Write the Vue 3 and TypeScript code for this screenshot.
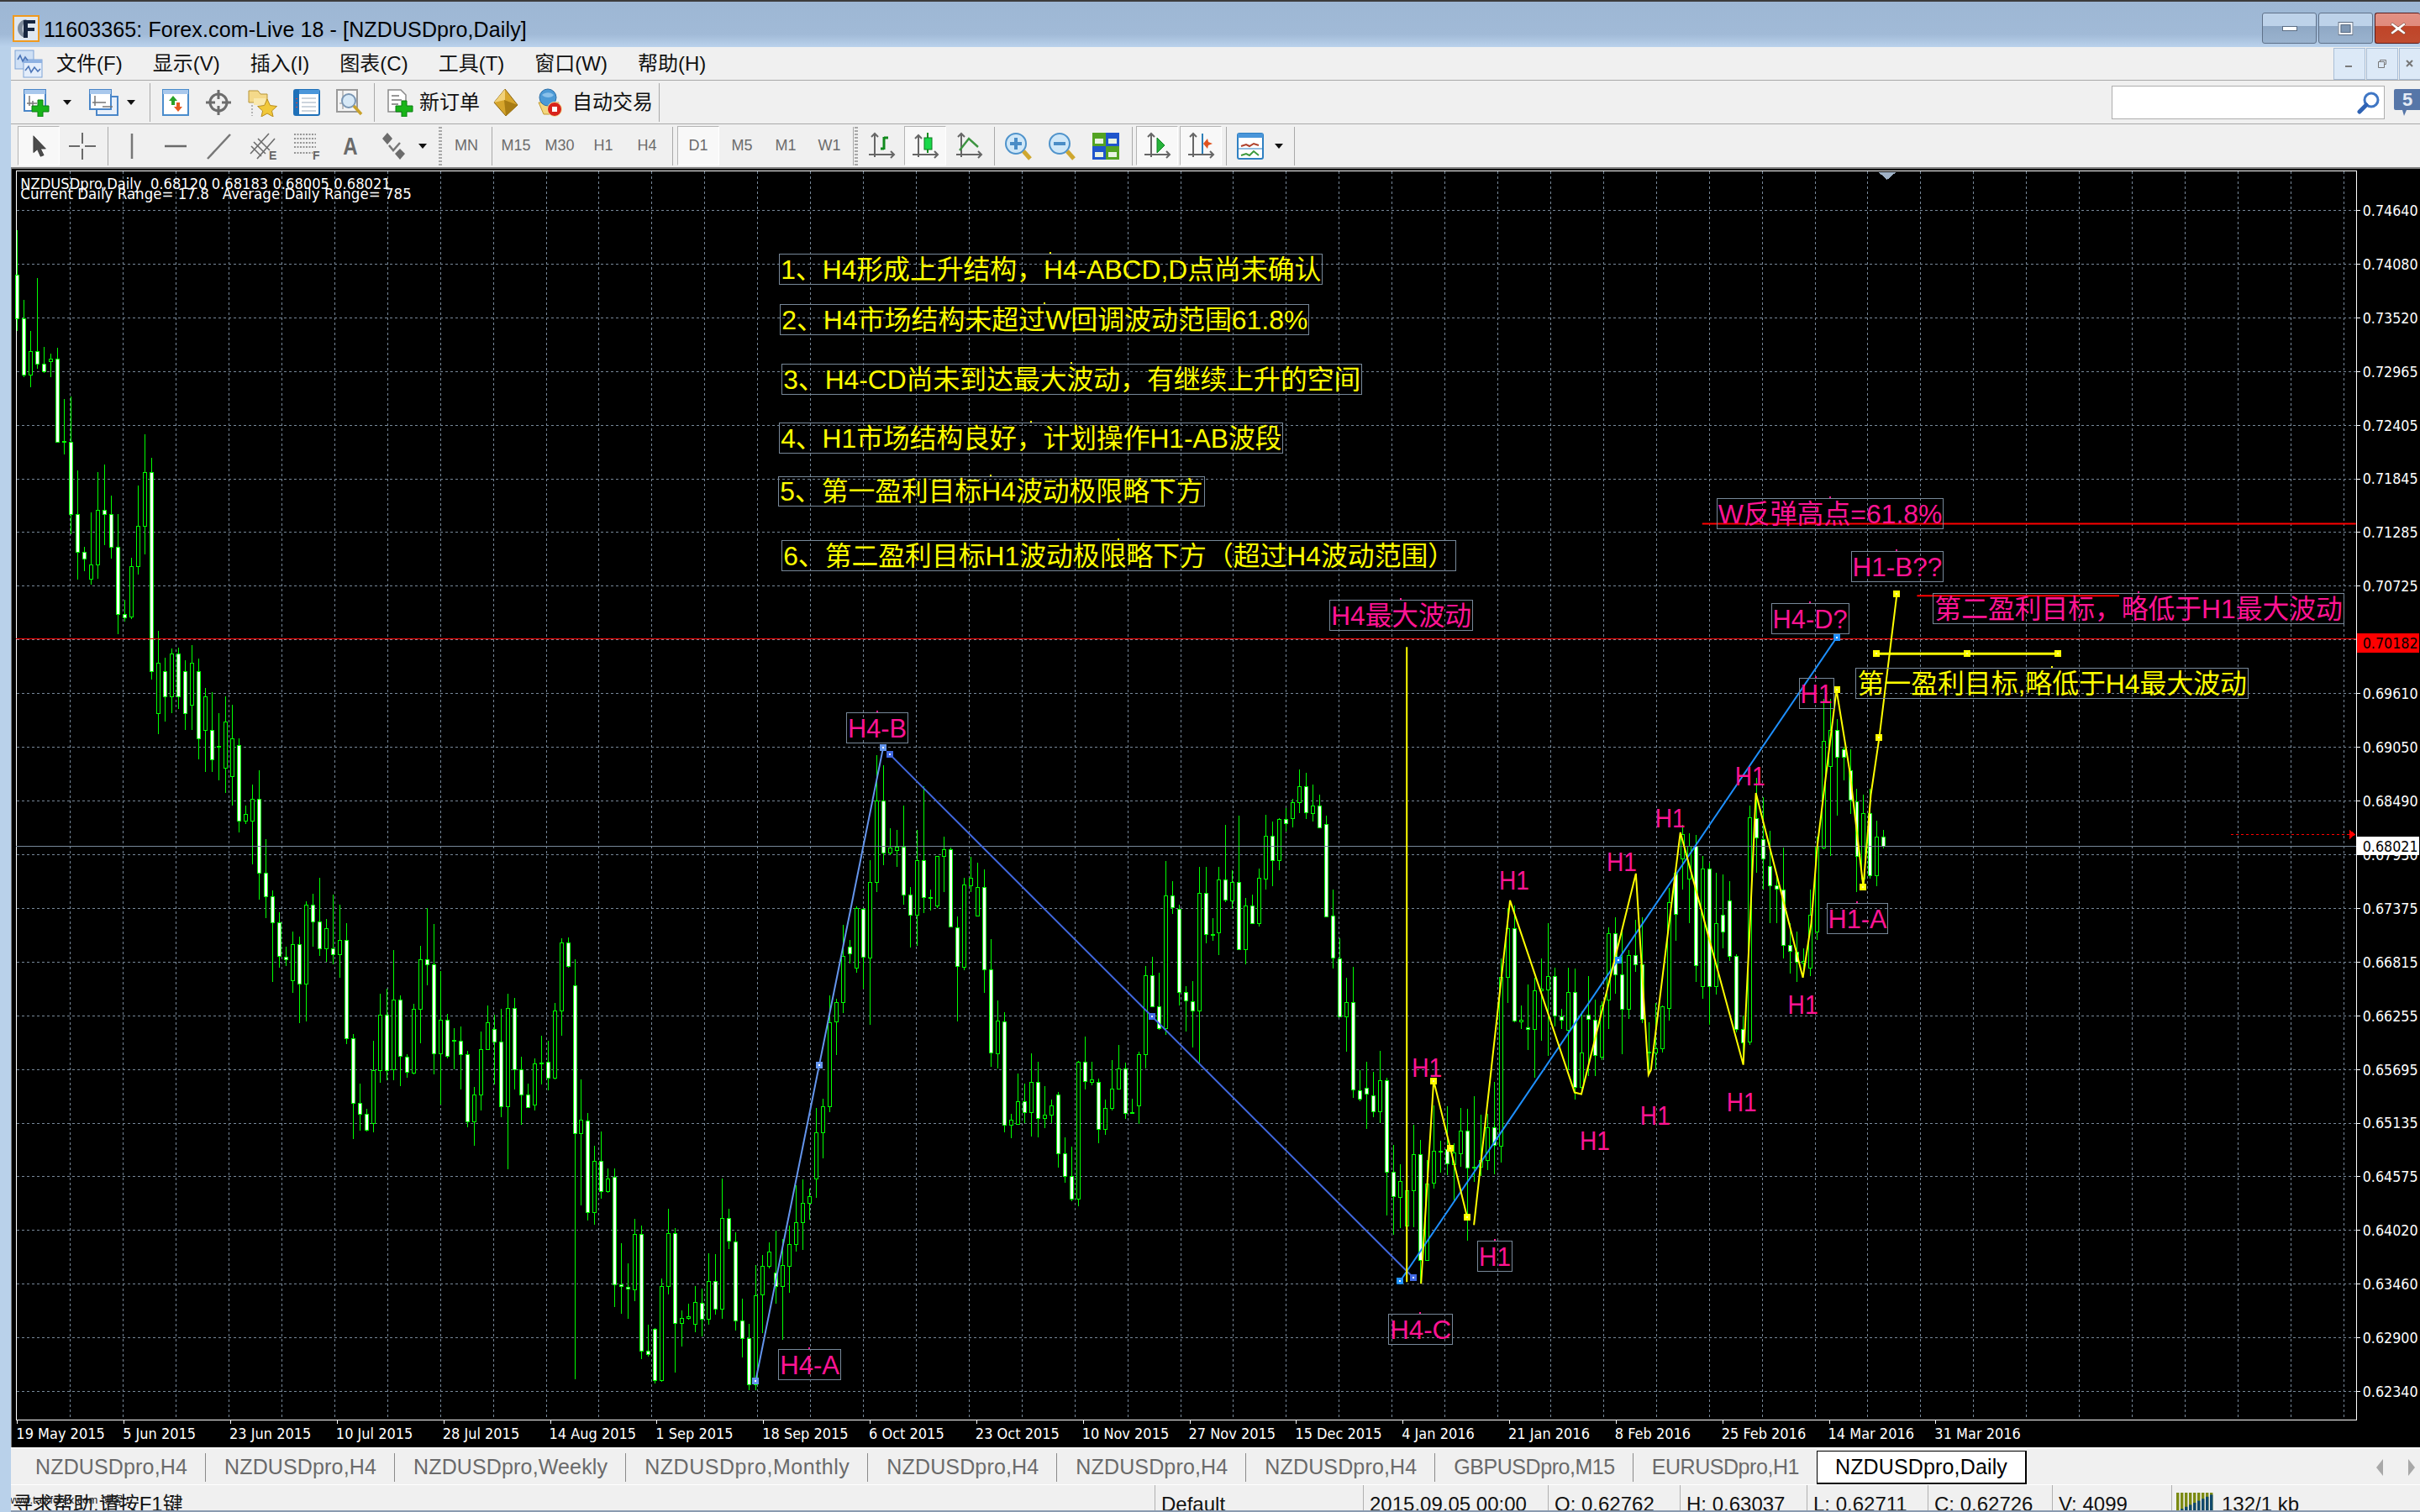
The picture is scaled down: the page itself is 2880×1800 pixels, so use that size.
<template>
  <div class="window">
    <header class="titlebar">
      <svg class="app-logo" viewBox="0 0 32 32">
        <rect x="1" y="1" width="30" height="30" fill="#dfe7f0" stroke="#f09a1e" stroke-width="2" />
        <path d="M17 5a11 11 0 0 0 0 22a14 14 0 0 1 0-22z" fill="#7f8c9c" />
        <path d="M13 6h14v4h-9v5h8v4h-8v8h-5z" fill="#17263f" />
      </svg>
      <span class="title-text">11603365: Forex.com-Live 18 - [NZDUSDpro,Daily]</span>
      <div class="win-buttons">
        <button class="win-btn">
          <svg viewBox="0 0 20 10" class="win-glyph"><rect x="1.5" y="2.5" width="17" height="5" fill="#fff" stroke="#5b6d84" /></svg>
        </button>
        <button class="win-btn">
          <svg viewBox="0 0 20 16" class="win-glyph"><rect x="2" y="1.5" width="15" height="13" fill="none" stroke="#fff" stroke-width="3" /><rect x="1" y="0.5" width="17" height="15" fill="none" stroke="#5b6d84" /><rect x="4" y="3.5" width="11" height="9" fill="#7f97b3" stroke="#5b6d84" /></svg>
        </button>
        <button class="win-btn win-btn--close">
          <svg viewBox="0 0 20 16" class="win-glyph"><path d="M3 1l7 5 7-5 2 2-6 5 6 5-2 2-7-5-7 5-2-2 6-5-6-5z" fill="#fff" stroke="#6d3a30" stroke-width="0.6" /></svg>
        </button>
      </div>
    </header>

    <div class="body">
      <nav class="menubar">
        <svg class="menu-icon" viewBox="0 0 34 34">
          <rect x="1" y="1" width="22" height="22" fill="#cfe0f5" stroke="#7ea4d6" />
          <rect x="11" y="12" width="22" height="21" fill="#e4eefb" stroke="#7ea4d6" />
          <rect x="11" y="12" width="22" height="4" fill="#8fb2e2" />
          <path d="M4 12l3-5 3 7 3-5 3 4M13 25l4-5 3 7 4-6 4 5 3-3" fill="none" stroke="#4d76b8" stroke-width="1.6" />
        </svg>
        <span v-for="m in menus" :key="m" class="menu-item">{{ m }}</span>
        <div class="mdi-buttons">
          <span class="mdi-btn"><svg viewBox="0 0 12 12" class="mdi-glyph"><rect x="1" y="8" width="8" height="2" fill="#7a7a7a" /></svg></span>
          <span class="mdi-btn"><svg viewBox="0 0 12 12" class="mdi-glyph"><path d="M3.5 3.5V1.5h7v5h-2M1.5 3.5h7v7h-7z" fill="none" stroke="#777" /></svg></span>
          <span class="mdi-btn mdi-btn--last"><svg viewBox="0 0 12 12" class="mdi-glyph"><path d="M2 2l7 7M9 2l-7 7" stroke="#777" stroke-width="2" /></svg></span>
        </div>
      </nav>

      <div class="toolbar toolbar--main">
        <svg class="ic" viewBox="0 0 34 34">
          <rect x="2" y="2" width="25" height="25" fill="#fff" stroke="#4a86c8" stroke-width="2" />
          <rect x="2" y="2" width="25" height="5" fill="#a9c8ec" />
          <path d="M8 9v12M12 15v8M5 18h12" stroke="#777" stroke-width="1.5" />
          <path d="M18 14h6v7h7v7h-7v6h-6v-6h-7v-7h7z" fill="#19b419" stroke="#0b7d12" />
        </svg>
        <span class="caret caret--a"></span>
        <svg class="ic ic--wide m-profile" viewBox="0 0 37 34">
          <rect x="10" y="10" width="25" height="22" fill="#e9f0fa" stroke="#4a86c8" stroke-width="2" />
          <rect x="2" y="2" width="25" height="23" fill="#fff" stroke="#4a86c8" stroke-width="2" />
          <rect x="2" y="2" width="25" height="5" fill="#a9c8ec" />
          <path d="M8 9v12M5 17h16M17 22h12" stroke="#777" stroke-width="1.5" />
        </svg>
        <span class="caret caret--b"></span>
        <span class="sep sep--main"></span>
        <div class="icon-group">
          <svg class="ic" viewBox="0 0 34 34">
            <rect x="2" y="2" width="30" height="30" fill="#fff" stroke="#4a8ccc" stroke-width="2" />
            <rect x="2" y="2" width="30" height="5" fill="#a9c8ec" />
            <path d="M14 9l5 6h-3v5h-4v-5H9z" fill="#29a329" />
            <path d="M20 28l-5-6h3v-5h4v5h3z" fill="#e65a20" />
          </svg>
          <svg class="ic" viewBox="0 0 34 34">
            <circle cx="17" cy="17" r="10" fill="none" stroke="#6d6d6d" stroke-width="3" />
            <path d="M17 2v11M17 21v11M2 17h11M21 17h11" stroke="#6d6d6d" stroke-width="3" />
          </svg>
          <svg class="ic ic--wide" viewBox="0 0 37 34">
            <path d="M2 8V3h11l3 4h8v10H2z" fill="#f4d98a" stroke="#b79536" />
            <path d="M8 12h14v8H8z" fill="#f9e8ad" />
            <path d="M24 13l3.5 7.5 8 1-6 5.5 1.6 7-7.1-4-7 4 1.6-7-6-5.5 8-1z" fill="#f1c83a" stroke="#b98e1f" />
            <path d="M6 20v13" stroke="#777" stroke-dasharray="2 2" />
          </svg>
          <svg class="ic" viewBox="0 0 34 34">
            <rect x="2" y="2" width="30" height="30" rx="2" fill="#fff" stroke="#1f70b8" stroke-width="2" />
            <rect x="2" y="2" width="30" height="5" fill="#4a96da" />
            <rect x="2" y="2" width="6" height="30" fill="#1f70b8" />
            <path d="M11 12h17M11 17h17M11 22h17M11 27h17" stroke="#9ab" />
            <path d="M5 12v1M5 17v1M5 22v1" stroke="#e43" stroke-width="2" />
          </svg>
          <svg class="ic" viewBox="0 0 34 34">
            <rect x="2" y="2" width="24" height="26" fill="#f4f4f4" stroke="#9a9a9a" stroke-width="2" />
            <path d="M9 3v22M5 18h18" stroke="#888" />
            <circle cx="16" cy="15" r="8" fill="#d7e9f7" stroke="#7a96b4" stroke-width="2" />
            <path d="M22 21l9 10" stroke="#c9a22c" stroke-width="3.5" />
          </svg>
        </div>
        <span class="sep sep--group-end"></span>
        <svg class="ic m-order" viewBox="0 0 34 34">
          <path d="M3 2h15l6 6v20H3z" fill="#fff" stroke="#8a8a8a" stroke-width="1.5" />
          <path d="M7 9h9M7 14h12M7 19h8" stroke="#777" stroke-width="1.5" />
          <path d="M19 15h6v6h7v7h-7v6h-6v-6h-7v-7h7z" fill="#19b419" stroke="#0b7d12" />
        </svg>
        <span class="tool-label m-order-label">新订单</span>
        <svg class="ic m-book" viewBox="0 0 34 34">
          <path d="M16 1l15 19-14 13L3 17z" fill="#d6a52c" stroke="#8a6512" />
          <path d="M16 1L3 17l13-3z" fill="#f2d27a" />
          <path d="M31 20L17 33l-2-19z" fill="#a87c14" />
        </svg>
        <svg class="ic m-auto" viewBox="0 0 34 34">
          <path d="M5 17h24l-5 14H11z" fill="#f3d67c" stroke="#c29a2d" />
          <circle cx="16" cy="11" r="10" fill="#4c9ad6" stroke="#2a6ea8" />
          <path d="M9 8c4-3 9-4 14 0-2 4-11 4-14 0z" fill="#8ac1ea" />
          <circle cx="24" cy="25" r="8.5" fill="#d8231b" stroke="#f3e6a0" />
          <rect x="21" y="22" width="6" height="6" fill="#fff" />
        </svg>
        <span class="tool-label m-auto-label">自动交易</span>
        <span class="sep sep--end"></span>
        <div class="search-box">
          <svg class="search-glyph" viewBox="0 0 28 28">
            <circle cx="17" cy="11" r="8" fill="#fff" stroke="#3f76c4" stroke-width="3" />
            <path d="M11 17L3 25" stroke="#2f63b4" stroke-width="5" stroke-linecap="round" />
          </svg>
        </div>
        <svg class="chat-badge" viewBox="0 0 32 34">
          <path d="M3 1h29v25H16l-3 7-2-7H3a2 2 0 0 1-2-2V3a2 2 0 0 1 2-2z" fill="#5676a8" />
          <text x="17" y="21" class="chat-num">5</text>
        </svg>
      </div>

      <div class="toolbar toolbar--tools">
        <span class="cell cell--on">
          <svg class="ic ic--sm" viewBox="0 0 34 34"><path d="M9 1v26l6-5 5 11 5-2-5-10h8z" fill="#4b4b4b" stroke="#333" /></svg>
        </span>
        <span class="cell">
          <svg class="ic" viewBox="0 0 34 34"><path d="M17 1v13M17 20v13M1 17h13M20 17h13" stroke="#6a6a6a" stroke-width="2" /></svg>
        </span>
        <span class="sep"></span>
        <span class="cell"><svg class="ic" viewBox="0 0 34 34"><path d="M17 2v30" stroke="#777" stroke-width="2.5" /></svg></span>
        <span class="cell"><svg class="ic" viewBox="0 0 34 34"><path d="M4 17h26" stroke="#6a6a6a" stroke-width="2.5" /></svg></span>
        <span class="cell"><svg class="ic" viewBox="0 0 34 34"><path d="M3 32L30 3" stroke="#777" stroke-width="2.5" /></svg></span>
        <span class="cell">
          <svg class="ic" viewBox="0 0 34 34">
            <path d="M2 26L24 2M10 32L31 8M6 12l14 14M11 8l14 14M3 17l12 12" stroke="#6c6c6c" stroke-width="1.6" />
            <text x="24" y="33" class="ic-letter">E</text>
          </svg>
        </span>
        <span class="cell">
          <svg class="ic" viewBox="0 0 34 34">
            <path d="M2 3h26M2 8h26M2 13h26M2 18h26M2 25h22" stroke="#777" stroke-width="1.6" stroke-dasharray="2 1.5" />
            <text x="24" y="33" class="ic-letter">F</text>
          </svg>
        </span>
        <span class="cell"><span class="tool-a">A</span></span>
        <span class="cell">
          <svg class="ic" viewBox="0 0 34 34">
            <path d="M9 1l6 7-6 7-6-7z" fill="#6c6c6c" />
            <path d="M11 16l5 6 8-9" fill="none" stroke="#777" stroke-width="2.5" />
            <path d="M24 20l6 6-6 7-6-7z" fill="#6c6c6c" />
          </svg>
        </span>
        <span class="caret caret--tool"></span>
        <span class="grip"></span>
        <span class="cell tf">MN</span>
        <span class="sep"></span>
        <span class="cell tf">M15</span>
        <span class="cell tf">M30</span>
        <span class="cell tf">H1</span>
        <span class="cell tf">H4</span>
        <span class="sep sep--before-day"></span>
        <span class="cell cell--on tf">D1</span>
        <span class="cell tf">M5</span>
        <span class="cell tf">M1</span>
        <span class="cell tf">W1</span>
        <span class="sep sep--tight"></span>
        <span class="grip grip--tight"></span>
        <span class="cell">
          <svg class="ic" viewBox="0 0 34 34">
            <path d="M9 2v28M2 27h30M5 6l4-4 4 4M28 23l4 4-4 4" fill="none" stroke="#666" stroke-width="2" />
            <path d="M20 6v15M20 7h5M16 20h4" fill="none" stroke="#118a1d" stroke-width="3" />
          </svg>
        </span>
        <span class="cell cell--on">
          <svg class="ic" viewBox="0 0 34 34">
            <path d="M9 4v26M2 27h30M5 8l4-4 4 4M28 23l4 4-4 4" fill="none" stroke="#666" stroke-width="2" />
            <path d="M20 1v24" stroke="#118a1d" stroke-width="2" />
            <rect x="16" y="7" width="9" height="14" fill="#19d84a" stroke="#0d7a1f" />
          </svg>
        </span>
        <span class="cell">
          <svg class="ic" viewBox="0 0 34 34">
            <path d="M8 2v28M2 27h30M4 6l4-4 4 4M28 23l4 4-4 4" fill="none" stroke="#666" stroke-width="2" />
            <path d="M6 22l11-14 11 10" fill="none" stroke="#3c9440" stroke-width="2.4" />
          </svg>
        </span>
        <span class="sep"></span>
        <span class="cell">
          <svg class="ic" viewBox="0 0 34 34">
            <circle cx="14" cy="14" r="12" fill="#cfe7f8" stroke="#4f93cb" stroke-width="2" />
            <path d="M14 7v14M7 14h14" stroke="#4a8cc6" stroke-width="4" />
            <path d="M23 23l8 9" stroke="#cfa72f" stroke-width="5" />
          </svg>
        </span>
        <span class="cell">
          <svg class="ic" viewBox="0 0 34 34">
            <circle cx="14" cy="14" r="12" fill="#cfe7f8" stroke="#4f93cb" stroke-width="2" />
            <path d="M7 14h14" stroke="#4a8cc6" stroke-width="4" />
            <path d="M23 23l8 9" stroke="#cfa72f" stroke-width="5" />
          </svg>
        </span>
        <span class="cell">
          <svg class="ic" viewBox="0 0 34 34">
            <rect x="1" y="1" width="16" height="16" fill="#53a322" />
            <rect x="17" y="1" width="16" height="16" fill="#1f55cc" />
            <rect x="1" y="17" width="16" height="16" fill="#1f55cc" />
            <rect x="17" y="17" width="16" height="16" fill="#53a322" />
            <path d="M4 8h10v6H4zM20 8h10v6H20zM4 24h10v6H4zM20 24h10v6H20z" fill="#e9f3e2" />
          </svg>
        </span>
        <span class="sep sep--wide"></span>
        <span class="cell cell--on">
          <svg class="ic" viewBox="0 0 34 34">
            <path d="M10 2v28M2 27h30M6 6l4-4 4 4M28 23l4 4-4 4" fill="none" stroke="#666" stroke-width="2" />
            <path d="M17 7l9 9-9 9z" fill="#26b33a" stroke="#0f8424" />
          </svg>
        </span>
        <span class="cell cell--on">
          <svg class="ic" viewBox="0 0 34 34">
            <path d="M8 2v28M2 27h30M4 6l4-4 4 4M28 23l4 4-4 4" fill="none" stroke="#666" stroke-width="2" />
            <path d="M19 2v24" stroke="#2d7fb8" stroke-width="2" />
            <path d="M20 14l5-6 1 4 5 2-5 2-1 4z" fill="#e0531f" />
          </svg>
        </span>
        <span class="sep"></span>
        <span class="cell">
          <svg class="ic" viewBox="0 0 34 34">
            <rect x="2" y="2" width="30" height="30" rx="2" fill="#fff" stroke="#2f80c2" stroke-width="2" />
            <rect x="2" y="2" width="30" height="5" fill="#4a96da" />
            <path d="M6 17l6-2 4 2 5-3 6 2" fill="none" stroke="#b0402a" stroke-width="2" />
            <path d="M6 28l6-2 4 2 5-5 6 5" fill="none" stroke="#3d9a3d" stroke-width="2" />
            <path d="M2 20h30" stroke="#2f80c2" />
          </svg>
        </span>
        <span class="caret caret--tail"></span>
        <span class="sep sep--tail"></span>
      </div>

      <main class="chart">
        <svg class="chart-canvas" viewBox="13 201 2867 1524" shape-rendering="crispEdges">
          <path :d="gridPath" class="grid" />
          <path :d="tickPath" class="ticks" />
          <path d="M17 203.5H2805.5V1692.5H17.5V203.5" class="frame" />
          <path d="M2236 205h21l-10.5 9z" class="shift-mark" />

          <path :d="wickPath" class="wick" />
          <rect
            v-for="c in candles"
            :key="c.x"
            :x="c.x - 1.5"
            :y="c.top + 0.5"
            width="4"
            :height="Math.max(c.bot - c.top, 1)"
            :class="c.filled ? 'body-down' : 'body-up'"
          />

          <path d="M17 761.5H2805" class="hline-red" />
          <path d="M17 1008.5H2805" class="bid-line" />
          <path d="M2656 994.5H2798" class="ask-line" />
          <path d="M2797 988l7 6.5-7 6.5z" class="ask-arrow" />

          <g shape-rendering="geometricPrecision">
            <path d="M2026 624H2805" class="trend-red" />
            <path d="M2282 710H2523" class="trend-red" />
            <line x1="898" y1="1646" x2="1050" y2="891" class="trend trend--a" />
            <line x1="1058" y1="899" x2="1682" y2="1523" class="trend trend--b" />
            <line x1="1666" y1="1527" x2="2186" y2="760" class="trend trend--c" />
            <path d="M1674 771V1528" class="zig" />
            <polyline :points="zigA" class="zig" />
            <polyline :points="zigB" class="zig" />
            <path d="M2234 779H2450" class="zig zig--thick" />
          </g>

          <g v-for="m in blueMarks" :key="m.x">
            <rect :x="m.x - 4" :y="m.y - 4" width="8" height="8" :fill="m.c" />
            <rect :x="m.x - 1" :y="m.y - 1" width="2" height="2" fill="#fff" />
          </g>
          <g v-for="m in yellowMarks" :key="m.x">
            <rect :x="m.x - 4" :y="m.y - 4" width="8" height="8" fill="#ffff00" />
            <rect :x="m.x - 1" :y="m.y - 1" width="2" height="2" fill="#fff8a0" />
          </g>

          <g v-for="a in notes" :key="a.text + a.x + a.y">
            <template v-if="a.box">
              <rect :x="a.x + 0.5" :y="a.y + 0.5" :width="a.w" height="36" class="note-box" />
              <rect :x="a.x + a.w / 2 - 1" :y="a.y - 2" width="2" height="2" :fill="a.color" />
            </template>
            <text
              :x="a.x + 2"
              :y="a.box ? a.y + 30 : a.y + 23"
              :fill="a.color"
              :textLength="a.w - 3"
              lengthAdjust="spacingAndGlyphs"
              class="note-text"
            >{{ a.text }}</text>
          </g>

          <text x="22" y="225" textLength="441" lengthAdjust="spacingAndGlyphs" class="info">NZDUSDpro,Daily&nbsp;&nbsp;0.68120 0.68183 0.68005 0.68021</text>
          <text x="22" y="237" textLength="466" lengthAdjust="spacingAndGlyphs" class="info">Current Daily Range=&nbsp;17.8&nbsp;&nbsp;&nbsp;Average Daily Range=&nbsp;785</text>

          <text v-for="p in prices" :key="p.label" x="2813" :y="p.y + 7" textLength="66" lengthAdjust="spacingAndGlyphs" class="axis">{{ p.label }}</text>
          <text v-for="d in dates" :key="d.label" :x="d.x" y="1715" class="axis axis--date">{{ d.label }}</text>

          <rect x="2806" y="755" width="74" height="23" fill="#ff0000" />
          <text x="2813" y="773" textLength="66" lengthAdjust="spacingAndGlyphs" class="axis axis--dark">0.70182</text>
          <rect x="2806" y="997" width="74" height="22" fill="#ffffff" />
          <text x="2813" y="1015" textLength="66" lengthAdjust="spacingAndGlyphs" class="axis axis--dark">0.68021</text>
        </svg>
      </main>

      <div class="tabs">
        <span v-for="t in tabs" :key="t.id" class="tab" :class="{ 'tab--active': t.active }">{{ t.name }}</span>
        <span class="tab-arrows">
          <svg class="tab-arrow" viewBox="0 0 8 20"><path d="M8 0v20L0 10z" fill="#a8a8a8" /></svg>
          <svg class="tab-arrow" viewBox="0 0 8 20"><path d="M0 0v20l8-10z" fill="#a8a8a8" /></svg>
        </span>
      </div>

      <footer class="status">
        <span class="st-cell st-help">寻求帮助,请按F1键<em class="st-mark">www.talkforex.com 博客</em></span>
        <span class="st-cell st-profile">Default</span>
        <span class="st-cell st-time">2015.09.05 00:00</span>
        <span class="st-cell st-o">O: 0.62762</span>
        <span class="st-cell st-h">H: 0.63037</span>
        <span class="st-cell st-l">L: 0.62711</span>
        <span class="st-cell st-c">C: 0.62726</span>
        <span class="st-cell st-v">V: 4099</span>
        <span class="st-cell st-net">
          <svg class="net-bars" viewBox="0 0 46 24">
            <g v-for="n in 9" :key="n">
              <rect :x="(n - 1) * 5" y="0" width="3.4" height="24" fill="#7b8a12" />
              <rect :x="(n - 1) * 5" :y="24 - n * 2.4" width="3.4" :height="n * 2.4" fill="#114a6c" />
            </g>
          </svg>
          132/1 kb
        </span>
      </footer>
    </div>
  </div>
</template>

<script setup lang="ts">
type Row = [number, number, number, number, number]

interface Candle {
  x: number
  top: number
  bot: number
  hi: number
  lo: number
  filled: boolean
}

const candles: Candle[] = []

// rows are read off the reference as [high, body top, body bottom, low, filled]
const addRows = (from: number, y0: number, scale: number, rows: Row[]) => {
  rows.forEach((r, k) => {
    candles.push({
      x: 18 + 8 * (from + k),
      hi: Math.round(y0 + r[0] / scale),
      top: Math.round(y0 + r[1] / scale),
      bot: Math.round(y0 + r[2] / scale),
      lo: Math.round(y0 + r[3] / scale),
      filled: r[4] === 1
    })
  })
}

addRows(0, 190, 2.613, [
  [220, 358, 495, 533, 1], [436, 495, 670, 678, 1], [533, 597, 670, 707, 0], [368, 597, 636, 650, 1],
  [583, 636, 658, 663, 1], [604, 620, 628, 676, 0], [585, 620, 877, 877, 1], [745, 876, 877, 916, 0],
  [738, 877, 1104, 1168, 1], [967, 1104, 1222, 1308, 1], [1207, 1222, 1243, 1283, 1], [1100, 1261, 1306, 1324, 0],
  [972, 1093, 1261, 1307, 0], [949, 1093, 1104, 1202, 1], [1048, 1104, 1206, 1243, 1], [1105, 1206, 1417, 1478, 1],
  [1372, 1417, 1428, 1440, 1], [1240, 1266, 1423, 1432, 0], [1014, 1143, 1266, 1294, 0], [855, 973, 1143, 1231, 0],
  [928, 973, 1594, 1620, 1]
])
addRows(21, 0, 1, [
  [752, 790, 850, 875, 0], [784, 800, 830, 860, 1], [773, 779, 830, 850, 0], [772, 779, 830, 845, 1],
  [787, 800, 850, 870, 1], [769, 790, 840, 870, 0], [785, 800, 880, 905, 1], [820, 830, 870, 920, 0],
  [825, 870, 905, 920, 1], [850, 889, 890, 930, 1], [830, 860, 915, 945, 0], [840, 880, 925, 960, 0]
])
addRows(33, 760, 1.96, [
  [235, 250, 428, 455, 1], [392, 411, 428, 435, 0], [343, 377, 427, 530, 0], [310, 377, 548, 612, 1],
  [470, 548, 603, 655, 1], [590, 603, 665, 803, 1], [641, 665, 743, 771, 1], [722, 744, 750, 767, 1],
  [686, 716, 799, 830, 0], [698, 716, 807, 900, 1], [615, 624, 807, 895, 0], [597, 624, 663, 722, 1],
  [560, 663, 726, 742, 1], [657, 679, 726, 757, 0], [600, 726, 738, 763, 1], [623, 705, 738, 793, 0],
  [667, 705, 934, 948, 1], [925, 934, 1085, 1173, 1], [1041, 1085, 1112, 1153, 1], [1100, 1112, 1151, 1155, 1],
  [941, 1010, 1132, 1157, 0], [831, 881, 1010, 1038, 0], [820, 881, 1010, 1033, 1], [729, 844, 1008, 1033, 0],
  [835, 844, 977, 1046, 1], [972, 979, 1014, 1028, 1], [855, 867, 1016, 1020, 0], [719, 750, 867, 947, 0],
  [632, 750, 763, 812, 1], [668, 763, 970, 1020, 1], [778, 891, 971, 1090, 0], [878, 891, 977, 981, 1],
  [912, 938, 940, 1007, 1], [907, 940, 973, 1055, 1], [965, 973, 1128, 1142, 1], [1049, 1067, 1128, 1187, 0],
  [920, 961, 1067, 1103, 0], [858, 897, 961, 961, 0], [880, 914, 942, 1042, 1], [866, 942, 1093, 1119, 1],
  [831, 865, 1093, 1243, 0], [840, 865, 1008, 1055, 1], [978, 1008, 1067, 1136, 1], [1040, 1067, 1095, 1097, 1],
  [982, 993, 1089, 1104, 0], [929, 991, 993, 1043, 1], [940, 989, 1028, 1056, 1], [853, 871, 1028, 1030, 0],
  [702, 711, 871, 929, 0], [700, 711, 767, 770, 1], [750, 811, 1159, 1733, 1], [1030, 1126, 1159, 1327, 0],
  [1109, 1127, 1342, 1362, 1], [1188, 1224, 1342, 1372, 0], [1154, 1224, 1293, 1312, 1], [1240, 1265, 1293, 1297, 0]
])
addRows(89, 1400, 3, [
  [-22, 10, 393, 473, 1], [246, 394, 400, 497, 1], [318, 401, 409, 515, 1], [159, 214, 412, 452, 0],
  [183, 214, 631, 659, 1], [537, 631, 643, 650, 1], [550, 553, 736, 746, 1], [372, 400, 736, 740, 0],
  [123, 211, 400, 428, 0], [192, 211, 532, 707, 1], [486, 514, 532, 614, 0], [461, 508, 514, 518, 0],
  [399, 457, 535, 563, 0], [407, 458, 517, 578, 1], [281, 382, 517, 536, 0], [285, 382, 481, 500, 1],
  [15, 157, 481, 515, 0], [123, 157, 238, 267, 1], [207, 241, 523, 557, 1], [444, 523, 586, 653, 1],
  [534, 586, 751, 770, 1], [323, 433, 751, 772, 0], [288, 328, 430, 566, 0], [243, 277, 328, 335, 0],
  [201, 352, 400, 463, 1], [232, 325, 400, 592, 0], [183, 250, 328, 422, 0], [40, 172, 248, 275, 0],
  [18, 103, 172, 269, 0], [52, 79, 103, 163, 0]
])
addRows(119, 760, 1.96, [
  [1097, 1157, 1265, 1310, 0], [1077, 1093, 1157, 1217, 0], [835, 897, 1093, 1107, 0], [843, 850, 895, 975, 0]
])
addRows(123, 860, 2.613, [
  [632, 730, 872, 907, 0], [680, 701, 722, 752, 1], [575, 581, 765, 780, 0], [580, 583, 732, 832, 1],
  [430, 500, 735, 942, 0], [105, 245, 500, 530, 0], [135, 245, 407, 447, 1], [332, 393, 407, 415, 0],
  [337, 390, 399, 452, 0], [262, 390, 537, 570, 1], [515, 537, 600, 703, 1], [336, 430, 600, 697, 0],
  [200, 430, 547, 595, 1], [523, 547, 549, 587, 1], [418, 419, 571, 580, 0], [358, 396, 419, 530, 0],
  [392, 396, 638, 639, 1], [605, 639, 761, 932, 1], [487, 508, 762, 773, 0], [420, 485, 509, 530, 0],
  [440, 516, 603, 607, 0], [460, 516, 772, 843, 1], [678, 772, 1030, 1073, 1], [868, 931, 1031, 1078, 0],
  [905, 932, 1254, 1280, 1], [1220, 1238, 1255, 1298, 0], [1095, 1180, 1252, 1253, 0], [1125, 1180, 1216, 1248, 1],
  [1033, 1122, 1216, 1293, 0], [1058, 1122, 1234, 1296, 1], [1133, 1224, 1234, 1267, 0], [1176, 1193, 1224, 1250, 0],
  [1152, 1161, 1345, 1390, 1], [1295, 1345, 1417, 1438, 1], [1325, 1417, 1488, 1495, 1], [1055, 1057, 1488, 1510, 0],
  [980, 1057, 1119, 1145, 1], [1058, 1112, 1120, 1132, 0], [1110, 1122, 1270, 1315, 1], [1175, 1201, 1271, 1288, 0],
  [1052, 1143, 1201, 1210, 0], [1006, 1080, 1143, 1145, 0], [1062, 1080, 1218, 1235, 1], [1172, 1216, 1218, 1219, 1],
  [1027, 1036, 1193, 1252, 0], [760, 788, 1036, 1080, 0], [732, 788, 885, 888, 1], [782, 887, 955, 960, 1],
  [434, 542, 955, 975, 0], [497, 540, 578, 598, 1], [570, 582, 842, 882, 1], [823, 842, 868, 963, 1],
  [808, 869, 900, 1015, 1], [452, 534, 900, 1060, 0], [453, 532, 660, 690, 1], [612, 660, 664, 682, 1],
  [452, 492, 657, 727, 0], [321, 492, 555, 563, 1], [463, 500, 556, 582, 0], [293, 500, 707, 712, 1],
  [548, 573, 707, 755, 0], [538, 573, 628, 630, 1], [457, 487, 626, 637, 0], [290, 356, 488, 523, 0],
  [311, 356, 432, 512, 1], [300, 302, 432, 462, 0], [268, 302, 317, 343, 1], [240, 252, 300, 328, 0],
  [150, 200, 252, 285, 0], [160, 200, 283, 302, 1], [195, 260, 284, 310, 0], [227, 260, 328, 330, 1],
  [293, 320, 605, 610, 1], [523, 603, 735, 767, 1], [675, 736, 917, 918, 1], [797, 872, 917, 1027, 0],
  [763, 872, 1145, 1170, 1], [1085, 1147, 1172, 1180, 1], [1057, 1140, 1158, 1270, 1], [1090, 1162, 1212, 1232, 1],
  [1025, 1115, 1212, 1250, 0], [1107, 1115, 1402, 1540, 1], [1320, 1402, 1480, 1600, 1]
])
addRows(206, 1100, 2.851, [
  [822, 877, 933, 1038, 0], [830, 910, 1028, 1130, 0], [683, 788, 910, 1035, 0], [738, 788, 1145, 1225, 1],
  [808, 888, 1147, 1150, 0], [620, 775, 885, 903, 0], [740, 775, 777, 850, 1], [622, 770, 818, 857, 1],
  [750, 780, 820, 945, 0], [628, 708, 783, 830, 0], [630, 708, 833, 1080, 1], [587, 831, 833, 880, 1],
  [650, 808, 830, 860, 0], [648, 695, 808, 840, 0], [540, 695, 755, 855, 1], [120, 183, 757, 815, 0],
  [-50, 18, 183, 270, 0], [-60, 18, 330, 335, 1], [280, 328, 334, 360, 0], [208, 353, 359, 430, 1],
  [185, 227, 360, 525, 0], [120, 222, 228, 400, 0], [0, 181, 226, 450, 0], [150, 181, 314, 350, 1],
  [290, 316, 328, 360, 1], [152, 233, 363, 500, 0], [155, 233, 557, 600, 1], [300, 440, 557, 580, 0],
  [180, 310, 325, 520, 1], [260, 327, 449, 520, 1], [265, 280, 452, 465, 0], [15, 35, 260, 360, 0],
  [-20, 35, 175, 240, 1], [20, 175, 290, 445, 1], [90, 107, 292, 325, 0], [-10, 107, 140, 165, 1],
  [-20, 140, 326, 340, 1], [335, 435, 440, 515, 1], [270, 425, 440, 495, 0], [280, 283, 424, 440, 0],
  [-120, -71, 287, 330, 0], [-200, -170, -30, 60, 1]
])
addRows(248, 0, 1, [
  [983, 994, 1023, 1060, 0], [993, 1008, 1047, 1100, 0], [995, 1008, 1150, 1170, 1], [1020, 1035, 1175, 1190, 0],
  [1028, 1035, 1175, 1221, 1], [1040, 1100, 1175, 1185, 0], [1042, 1090, 1110, 1130, 1], [1050, 1073, 1139, 1145, 1],
  [1137, 1139, 1226, 1230, 1], [1210, 1226, 1242, 1266, 1], [960, 974, 1241, 1245, 0], [927, 975, 998, 1040, 1],
  [950, 1000, 1023, 1060, 1], [990, 1032, 1055, 1100, 1], [1040, 1055, 1059, 1100, 1], [1010, 1060, 1126, 1142, 1],
  [1100, 1126, 1133, 1160, 1], [1110, 1134, 1146, 1170, 1], [1130, 1145, 1147, 1155, 0], [1060, 1090, 1153, 1163, 0],
  [997, 1008, 1110, 1120, 0], [833, 883, 1010, 1012, 0], [833, 870, 913, 1020, 0], [857, 870, 902, 972, 1],
  [890, 893, 902, 930, 1], [893, 918, 953, 970, 1], [940, 955, 1020, 1063, 1], [947, 969, 1047, 1060, 0],
  [940, 969, 1043, 1047, 1], [978, 997, 1043, 1056, 0], [989, 997, 1008, 1011, 1]
])

const wickPath = candles.map((c) => `M${c.x + 0.5} ${c.hi}V${c.lo}`).join('')

const gridPath = (() => {
  let d = ''
  for (let k = 0; k < 23; k++) d += `M18 ${250.5 + 64 * k}H2805`
  for (let k = 0; k < 44; k++) d += `M${81.5 + 63 * k} 204V1692`
  return d
})()

const dateLabels = [
  '19 May 2015', '5 Jun 2015', '23 Jun 2015', '10 Jul 2015', '28 Jul 2015', '14 Aug 2015', '1 Sep 2015',
  '18 Sep 2015', '6 Oct 2015', '23 Oct 2015', '10 Nov 2015', '27 Nov 2015', '15 Dec 2015', '4 Jan 2016',
  '21 Jan 2016', '8 Feb 2016', '25 Feb 2016', '14 Mar 2016', '31 Mar 2016'
]
const dates = dateLabels.map((label, k) => ({ label, x: 17 + 127 * k }))

const priceLabels = [
  '0.74640', '0.74080', '0.73520', '0.72965', '0.72405', '0.71845', '0.71285', '0.70725', '', '0.69610', '0.69050',
  '0.68490', '0.67930', '0.67375', '0.66815', '0.66255', '0.65695', '0.65135', '0.64575', '0.64020', '0.63460',
  '0.62900', '0.62340'
]
const prices = priceLabels
  .map((label, k) => ({ label, y: 250 + 64 * k }))
  .filter((p) => p.label !== '')

const tickPath =
  priceLabels.map((_, k) => `M2805 ${250.5 + 64 * k}H2810`).join('') +
  dateLabels.map((_, k) => `M${18.5 + 127 * k} 1692V1697`).join('')

const zigA = '1691,1530 1706,1288 1726,1369 1746,1451'
const zigB =
  '1754,1460 1797,1073 1874,1302 1882,1304 1947,1041 1962,1281 1965,1275 2000,992 2075,1269 2083,1100 2090,945 2146,1165 2156,1100 2163,1010 2186,822 2202,920 2218,1057 2227,947 2237,879 2258,708'

const blueMarks = [
  { x: 898, y: 1646, c: '#6495ed' },
  { x: 974, y: 1269, c: '#6495ed' },
  { x: 1050, y: 891, c: '#6495ed' },
  { x: 1058, y: 899, c: '#4169e1' },
  { x: 1370, y: 1211, c: '#4169e1' },
  { x: 1682, y: 1523, c: '#4169e1' },
  { x: 1666, y: 1527, c: '#1e90ff' },
  { x: 1926, y: 1144, c: '#1e90ff' },
  { x: 2186, y: 760, c: '#1e90ff' }
]
const yellowMarks = [
  { x: 1706, y: 1288 },
  { x: 1726, y: 1369 },
  { x: 1746, y: 1451 },
  { x: 2186, y: 822 },
  { x: 2218, y: 1057 },
  { x: 2237, y: 879 },
  { x: 2258, y: 708 },
  { x: 2234, y: 779 },
  { x: 2342, y: 779 },
  { x: 2450, y: 779 }
]

const YELLOW = '#ffff00'
const PINK = '#ff1493'

const notes = [
  { text: '1、H4形成上升结构，H4-ABCD,D点尚未确认', x: 926, y: 302, w: 647, color: YELLOW, box: true },
  { text: '2、H4市场结构未超过W回调波动范围61.8%', x: 927, y: 362, w: 630, color: YELLOW, box: true },
  { text: '3、H4-CD尚未到达最大波动，有继续上升的空间', x: 929, y: 433, w: 691, color: YELLOW, box: true },
  { text: '4、H1市场结构良好，计划操作H1-AB波段', x: 926, y: 503, w: 600, color: YELLOW, box: true },
  { text: '5、第一盈利目标H4波动极限略下方', x: 925, y: 567, w: 507, color: YELLOW, box: true },
  { text: '6、第二盈利目标H1波动极限略下方（超过H4波动范围）', x: 929, y: 644, w: 803, color: YELLOW, box: true },
  { text: 'W反弹高点=61.8%', x: 2043, y: 594, w: 270, color: PINK, box: true },
  { text: 'H1-B??', x: 2203, y: 657, w: 110, color: PINK, box: true },
  { text: 'H4-D?', x: 2108, y: 719, w: 92, color: PINK, box: true },
  { text: '第二盈利目标，略低于H1最大波动', x: 2301, y: 707, w: 489, color: PINK, box: true },
  { text: '第一盈利目标,略低于H4最大波动', x: 2209, y: 796, w: 467, color: YELLOW, box: true },
  { text: 'H4最大波动', x: 1582, y: 715, w: 170, color: PINK, box: true },
  { text: 'H4-B', x: 1006, y: 849, w: 73, color: PINK, box: true },
  { text: 'H4-A', x: 925, y: 1608, w: 74, color: PINK, box: true },
  { text: 'H4-C', x: 1652, y: 1566, w: 76, color: PINK, box: true },
  { text: 'H1-A', x: 2174, y: 1076, w: 73, color: PINK, box: true },
  { text: 'H1', x: 2141, y: 808, w: 41, color: PINK, box: true },
  { text: 'H1', x: 1758, y: 1479, w: 41, color: PINK, box: true },
  { text: 'H1', x: 2063, y: 913, w: 39, color: PINK, box: false },
  { text: 'H1', x: 1968, y: 963, w: 39, color: PINK, box: false },
  { text: 'H1', x: 1910, y: 1015, w: 39, color: PINK, box: false },
  { text: 'H1', x: 1782, y: 1037, w: 39, color: PINK, box: false },
  { text: 'H1', x: 1678, y: 1260, w: 39, color: PINK, box: false },
  { text: 'H1', x: 1878, y: 1348, w: 39, color: PINK, box: false },
  { text: 'H1', x: 1950, y: 1318, w: 39, color: PINK, box: false },
  { text: 'H1', x: 2053, y: 1301, w: 39, color: PINK, box: false },
  { text: 'H1', x: 2126, y: 1185, w: 39, color: PINK, box: false }
]

const menus = ['文件(F)', '显示(V)', '插入(I)', '图表(C)', '工具(T)', '窗口(W)', '帮助(H)']

const tabs = [
  { id: 1, name: 'NZDUSDpro,H4' },
  { id: 2, name: 'NZDUSDpro,H4' },
  { id: 3, name: 'NZDUSDpro,Weekly' },
  { id: 4, name: 'NZDUSDpro,Monthly' },
  { id: 5, name: 'NZDUSDpro,H4' },
  { id: 6, name: 'NZDUSDpro,H4' },
  { id: 7, name: 'NZDUSDpro,H4' },
  { id: 8, name: 'GBPUSDpro,M15' },
  { id: 9, name: 'EURUSDpro,H1' },
  { id: 10, name: 'NZDUSDpro,Daily', active: true }
]
</script>

<style>
html,
body {
  margin: 0;
  background: #b9d1ea;
}
</style>

<style scoped>
.window {
  display: flex;
  flex-direction: column;
  width: 2880px;
  height: 1800px;
  overflow: hidden;
  background: #b9d1ea;
  font-family: 'Liberation Sans', 'Noto Sans CJK SC', sans-serif;
  color: #000;
}

.titlebar {
  display: flex;
  align-items: flex-start;
  flex: 0 0 54px;
  border-top: 2px solid #3c3c3c;
  padding-left: 15px;
  background: linear-gradient(#9db7d4 0, #a1bad7 72%, #bad2ec 100%);
}

.app-logo {
  width: 32px;
  height: 32px;
  margin-top: 16px;
}

.title-text {
  margin: 17px 0 0 5px;
  font-size: 25px;
  line-height: 32px;
  letter-spacing: 0.12px;
}

.win-buttons {
  display: flex;
  gap: 2px;
  margin: 13px 0 0 auto;
}

.win-btn {
  display: flex;
  align-items: center;
  justify-content: center;
  width: 65px;
  height: 37px;
  padding: 0;
  border: 1px solid #5f7189;
  border-radius: 3px;
  background: linear-gradient(#bdd2e9 0, #bdd2e9 42%, #8fa8c5 43%, #9ab3cf 100%);
}

.win-btn--close {
  width: 54px;
  border-color: #5a1d1d;
  border-right: 0;
  background: linear-gradient(#e39184 0, #e08a7c 42%, #bf4428 43%, #c04c30 100%);
}

.win-glyph {
  width: 20px;
  height: 16px;
}

.body {
  display: flex;
  flex: 1;
  flex-direction: column;
  min-height: 0;
  margin-left: 13px;
}

.menubar {
  display: flex;
  align-items: center;
  flex: 0 0 39px;
  padding-left: 4px;
  border-bottom: 1px solid #a9a9a9;
  background: #f0f0f0;
}

.menu-icon {
  width: 34px;
  height: 34px;
  margin-right: 16px;
}

.menu-item {
  margin-right: 36px;
  font-size: 24px;
  line-height: 1;
  color: #111;
}

.mdi-buttons {
  display: flex;
  gap: 1px;
  align-self: flex-start;
  margin: 1px 0 0 auto;
}

.mdi-btn {
  display: flex;
  align-items: center;
  justify-content: center;
  width: 36px;
  height: 36px;
  border: 1px solid #a9bed6;
  background: #dce9f7;
  border-bottom-width: 1px;
}

.mdi-btn--last {
  width: 24px;
  border-right: 0;
}

.mdi-glyph {
  width: 12px;
  height: 12px;
}

.toolbar {
  display: flex;
  align-items: center;
  background: #f0f0f0;
}

.toolbar--main {
  flex: 0 0 51px;
  padding-left: 14px;
  border-bottom: 1px solid #a9a9a9;
}

.toolbar--tools {
  flex: 0 0 51px;
  padding-left: 8px;
  border-bottom: 2px solid #808080;
}

.ic {
  flex: none;
  width: 34px;
  height: 34px;
}

.ic--wide {
  width: 37px;
}

.ic--sm {
  width: 26px;
}

.ic-letter {
  font-size: 14px;
  font-weight: 700;
  fill: #666;
}

.icon-group {
  display: flex;
  align-items: center;
  gap: 17px;
  padding: 0 12px 0 13px;
}

.caret {
  flex: none;
  width: 0;
  height: 0;
  border-left: 5px solid transparent;
  border-right: 5px solid transparent;
  border-top: 6px solid #111;
}

.caret--a {
  margin-left: 14px;
}

.caret--b {
  margin-left: 9px;
}

.caret--tool {
  margin-left: 2px;
}

.caret--tail {
  margin-left: 2px;
}

.m-profile {
  margin-left: 20px;
}

.m-order {
  margin-left: 13px;
}

.m-order-label {
  margin-left: 6px;
}

.m-book {
  margin-left: 14px;
}

.m-auto {
  margin-left: 17px;
}

.m-auto-label {
  margin-left: 11px;
}

.tool-label {
  font-size: 24px;
  line-height: 1;
  color: #111;
}

.sep {
  flex: none;
  width: 1px;
  height: 46px;
  margin: 0 3px;
  background: #a9a9a9;
}

.sep--main {
  margin: 0 0 0 17px;
}

.sep--group-end {
  margin: 0;
}

.sep--end {
  margin: 0 0 0 7px;
}

.sep--before-day {
  margin: 0 5px 0 3px;
}

.sep--tight {
  margin: 0 0 0 1px;
}

.sep--wide {
  margin: 0 4px;
}

.sep--tail {
  margin-left: 13px;
}

.grip {
  flex: none;
  width: 4px;
  height: 46px;
  margin: 0 4px 0 14px;
  background: repeating-linear-gradient(#a8a8a8 0 2px, transparent 2px 4px);
}

.grip--tight {
  margin: 0 3px 0 1px;
}

.cell {
  display: flex;
  flex: none;
  align-items: center;
  justify-content: center;
  box-sizing: border-box;
  width: 50px;
  height: 47px;
  margin-right: 2px;
}

.cell--on {
  border: 1px solid;
  border-color: #b4b4b4 #fff #fff #b4b4b4;
  background: #f8f8f8;
}

.tf {
  font-size: 18px;
  color: #6c6c6c;
}

.tool-a {
  font-size: 30px;
  font-weight: 700;
  color: #6a6a6a;
  transform: scaleX(0.8);
}

.search-box {
  display: flex;
  align-items: center;
  justify-content: flex-end;
  box-sizing: border-box;
  width: 325px;
  height: 40px;
  margin-left: auto;
  padding-right: 4px;
  border: 1px solid #aeaeae;
  background: #fff;
}

.search-glyph {
  width: 28px;
  height: 28px;
}

.chat-badge {
  width: 32px;
  height: 34px;
  margin-left: 10px;
}

.chat-num {
  font-size: 22px;
  font-weight: 700;
  fill: #e4ebf5;
  text-anchor: middle;
}

.chart {
  position: relative;
  flex: 1;
  min-height: 0;
  background: #000;
}

.chart-canvas {
  display: block;
  width: 100%;
  height: 100%;
  background: #000;
  border-left: 1px solid #7d7d7d;
  box-sizing: border-box;
}

.grid {
  fill: none;
  stroke: #778899;
  stroke-dasharray: 3 3;
}

.ticks,
.frame {
  fill: none;
  stroke: #fff;
}

.shift-mark {
  fill: #a0b2c6;
}

.wick {
  fill: none;
  stroke: #00ff00;
}

.body-up,
.body-down {
  stroke: #00ff00;
}

.body-up {
  fill: #000;
}

.body-down {
  fill: #fff;
}

.hline-red {
  stroke: #ff0000;
}

.bid-line {
  stroke: #778899;
}

.ask-line {
  stroke: #ff0000;
  stroke-dasharray: 3 3;
}

.ask-arrow {
  fill: #ff0000;
}

.trend-red {
  stroke: #ff0000;
  stroke-width: 2;
}

.trend {
  stroke-width: 2;
}

.trend--a {
  stroke: #6495ed;
}

.trend--b {
  stroke: #4169e1;
}

.trend--c {
  stroke: #1e90ff;
}

.zig {
  fill: none;
  stroke: #ffff00;
  stroke-width: 2;
}

.zig--thick {
  stroke-width: 3;
}

.note-box {
  fill: none;
  stroke: #778899;
}

.note-text {
  font-family: 'Liberation Sans', 'Noto Sans CJK SC', sans-serif;
  font-size: 32px;
}

.info {
  font-family: 'DejaVu Sans', sans-serif;
  font-size: 17px;
  fill: #fff;
}

.axis {
  font-family: 'DejaVu Sans', sans-serif;
  font-stretch: condensed;
  font-size: 17px;
  fill: #fff;
}

.axis--date {
  font-size: 18px;
}

.axis--dark {
  fill: #000;
}

.tabs {
  display: flex;
  align-items: center;
  flex: 0 0 43px;
  box-sizing: border-box;
  padding: 2px 0 0 7px;
  background: #f0f0f0;
  border-top: 2px solid #fff;
  border-bottom: 1px solid #fff;
}

.tab {
  flex: none;
  height: 34px;
  padding: 0 21px 0 22px;
  border-right: 1px solid #8a8a8a;
  font-size: 25px;
  line-height: 32px;
  letter-spacing: 0.15px;
  color: #6a6a6a;
}

.tab:nth-child(4) {
  letter-spacing: 0.55px;
}

.tab:nth-child(8),
.tab:nth-child(9) {
  letter-spacing: -0.45px;
}

.tab:nth-last-child(3) {
  border-right: 0;
}

.tab--active {
  box-sizing: border-box;
  height: 40px;
  padding: 2px 21px;
  border: 1px solid #000;
  border-right-width: 2px;
  border-bottom-width: 2px;
  background: #fff;
  color: #000;
}

.tab-arrows {
  display: flex;
  gap: 30px;
  margin-left: auto;
  padding-right: 6px;
}

.tab-arrow {
  width: 8px;
  height: 20px;
}

.status {
  display: flex;
  align-items: flex-start;
  flex: 0 0 32px;
  box-sizing: border-box;
  overflow: hidden;
  border-bottom: 2px solid #8a9bb0;
  background: #f0f0f0;
  font-size: 24px;
  color: #111;
}

.st-cell {
  display: flex;
  align-items: flex-start;
  flex: none;
  box-sizing: border-box;
  height: 30px;
  padding: 11px 0 0 7px;
  border-left: 1px solid #b0b0b0;
  line-height: 1;
  white-space: nowrap;
}

.st-help {
  position: relative;
  width: 1361px;
  padding-left: 2px;
  border-left: 0;
}

.st-mark {
  position: absolute;
  top: 11px;
  left: -5px;
  font-size: 13px;
  font-style: normal;
  color: #222;
}

.st-profile {
  width: 248px;
}

.st-time {
  width: 220px;
}

.st-o {
  width: 157px;
}

.st-h {
  width: 151px;
}

.st-l {
  width: 144px;
}

.st-c {
  width: 148px;
}

.st-v {
  width: 142px;
}

.st-net {
  flex: 1;
  gap: 8px;
  padding-left: 5px;
}

.net-bars {
  width: 46px;
  height: 24px;
  margin-top: -2px;
}
</style>
